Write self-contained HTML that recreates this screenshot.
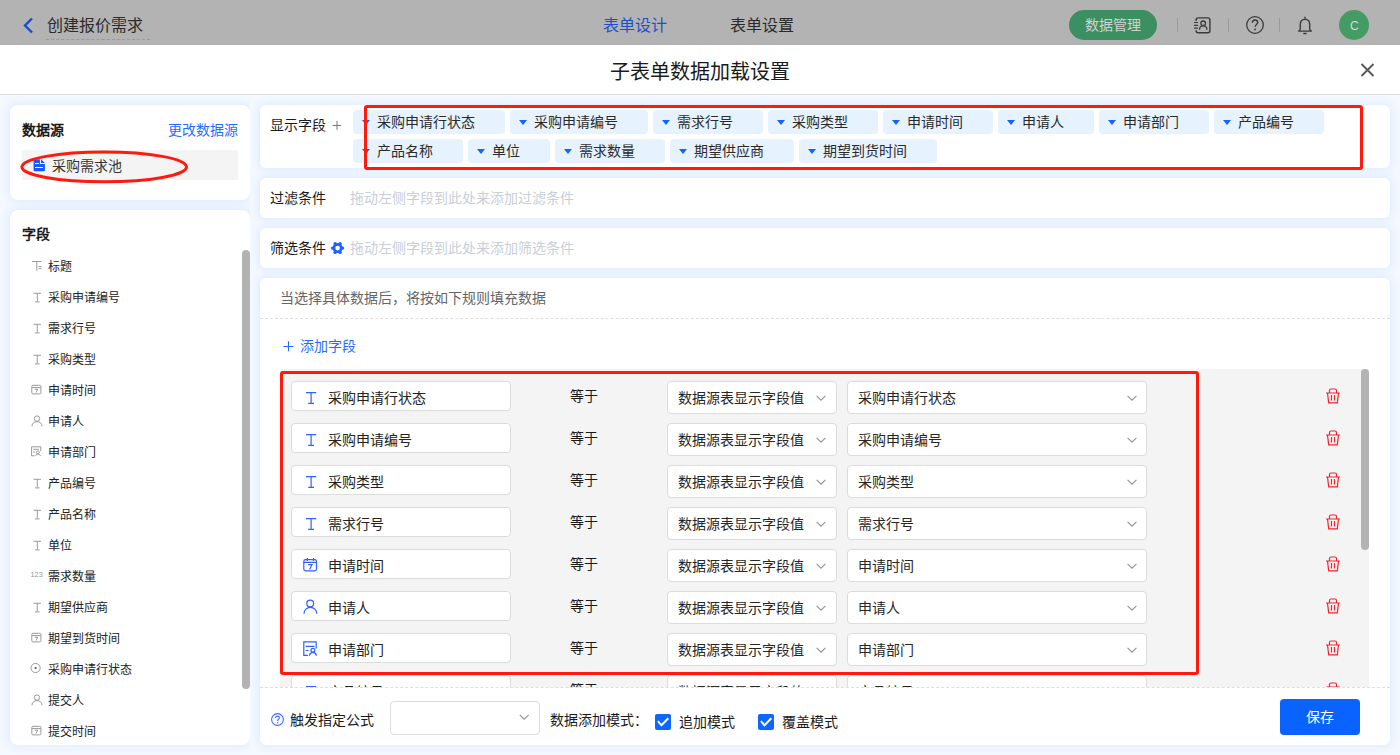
<!DOCTYPE html>
<html lang="zh-CN">
<head>
<meta charset="utf-8">
<style>
*{box-sizing:border-box;margin:0;padding:0}
html,body{width:1400px;height:755px;overflow:hidden}
body{position:relative;background:#f4f8ff;font-family:"Liberation Sans",sans-serif;color:#333;font-size:14px}
.a{position:absolute}
svg{display:block;overflow:visible}
.t{position:absolute;white-space:nowrap;line-height:1}
#top{left:0;top:0;width:1400px;height:45px;background:#b3b3b3;border-bottom:1px solid #b0b0b0}
#mh{left:0;top:45px;width:1400px;height:50px;background:#fff;border-bottom:1px solid #dfdfdf}
.card{position:absolute;background:#fff;border-radius:8px;box-shadow:0 0 9px 1px rgba(80,155,240,0.15)}
.tag{position:absolute;height:24px;background:#e6f2fe;border-radius:4px}
.tag i{position:absolute;left:9px;top:10px;width:0;height:0;border-left:4px solid transparent;border-right:4px solid transparent;border-top:5px solid #1463ff}
.tag span{position:absolute;left:24px;top:5px;font-size:14px;line-height:14px;color:#2a2a2a;white-space:nowrap}
.fi{position:absolute;left:22px;height:20px}
.fi span{position:absolute;left:26px;top:0;font-size:12px;line-height:12px;color:#222;white-space:nowrap}
.row{position:absolute;left:0;width:1089px;height:42px}
.inp{position:absolute;left:11px;top:12px;width:220px;height:30px;background:#fff;border:1px solid #dcdcdc;border-radius:4px}
.inp span{position:absolute;left:36px;top:9px;font-size:14px;line-height:14px;color:#222}
.eq{position:absolute;left:290px;top:20px;font-size:14px;line-height:14px;color:#1a1a1a}
.sel{position:absolute;top:12px;height:33px;background:#fff;border:1px solid #dcdcdc;border-radius:4px}
.sel span{position:absolute;left:10px;top:9px;font-size:14px;line-height:14px;color:#262626;white-space:nowrap}
.trash{position:absolute;left:1045px;top:19px}
</style>
</head>
<body>
<!-- top bar (masked) -->
<div id="top" class="a"></div>
<svg class="a" style="left:22px;top:17px" width="13" height="17" viewBox="0 0 13 17"><path d="M10 1.5 L3 8.5 L10 15.5" fill="none" stroke="#1a4ccc" stroke-width="2.4"/></svg>
<div class="t" style="left:47px;top:18px;font-size:16px;line-height:16px;color:#2b2b2b">创建报价需求</div>
<div class="a" style="left:46px;top:39px;width:104px;border-top:1px dashed #9a9a9a"></div>
<div class="t" style="left:603px;top:18px;font-size:16px;line-height:16px;color:#1d4fcc">表单设计</div>
<div class="t" style="left:730px;top:18px;font-size:16px;line-height:16px;color:#2b2b2b">表单设置</div>
<div class="a" style="left:1069px;top:10px;width:88px;height:30px;border-radius:15px;background:#3b8f61"></div>
<div class="t" style="left:1085px;top:18px;font-size:14px;line-height:14px;color:#d2d2d2">数据管理</div>
<div class="a" style="left:1177px;top:18px;width:1px;height:14px;background:#9a9a9a"></div>
<div class="a" style="left:1228px;top:18px;width:1px;height:14px;background:#9a9a9a"></div>
<div class="a" style="left:1279px;top:18px;width:1px;height:14px;background:#9a9a9a"></div>
<svg class="a" style="left:1192px;top:15px" width="22" height="21" viewBox="0 0 22 21"><path d="M4.1 5.9V4.9Q4.1 2.9 6.1 2.9H15.9Q17.9 2.9 17.9 4.9V15.8Q17.9 17.8 15.9 17.8H6.1Q4.1 17.8 4.1 15.8V15.2" stroke="#3a3a3a" stroke-width="1.4" fill="none"/><path d="M2 7.5H6M2 10.3H6M2 13.2H6" stroke="#3a3a3a" stroke-width="1.2"/><circle cx="11.2" cy="8.3" r="2.3" stroke="#3a3a3a" stroke-width="1.3" fill="none"/><path d="M7.5 14.8C7.5 12.4 9.1 10.9 11.2 10.9S14.9 12.4 14.9 14.8" stroke="#3a3a3a" stroke-width="1.3" fill="none"/></svg>
<svg class="a" style="left:1244px;top:14px" width="22" height="22" viewBox="0 0 22 22"><circle cx="11" cy="11" r="8.3" stroke="#3a3a3a" stroke-width="1.3" fill="none"/><path d="M8.3 8.8C8.3 7.1 9.5 6 11 6S13.7 7 13.7 8.6C13.7 10.4 11.1 10.6 11.1 12.8" stroke="#3a3a3a" stroke-width="1.4" fill="none"/><circle cx="11.1" cy="15.4" r="0.9" fill="#3a3a3a"/></svg>
<svg class="a" style="left:1296px;top:15px" width="18" height="21" viewBox="0 0 18 21"><path d="M9 1.8V3.4" stroke="#3a3a3a" stroke-width="1.5"/><path d="M2.6 16.1Q4.3 15.4 4.3 13.6V9.2C4.3 6.2 6.4 4.2 9 4.2S13.7 6.2 13.7 9.2V13.6Q13.7 15.4 15.4 16.1Z" stroke="#3a3a3a" stroke-width="1.4" fill="none" stroke-linejoin="round"/><path d="M7.3 18.5H10.7" stroke="#3a3a3a" stroke-width="1.4"/></svg>
<div class="a" style="left:1339px;top:10px;width:30px;height:30px;border-radius:15px;background:#459b64"></div>
<div class="t" style="left:1350px;top:20px;font-size:12px;line-height:12px;color:#d8d8d8">C</div>

<!-- modal header -->
<div id="mh" class="a"></div>
<div class="t" style="left:610px;top:62px;font-size:20px;line-height:20px;color:#1a1a1a">子表单数据加载设置</div>
<svg class="a" style="left:1360px;top:63px" width="15" height="14" viewBox="0 0 15 14"><path d="M1.5 1 L13.5 13 M13.5 1 L1.5 13" stroke="#555" stroke-width="1.8" fill="none"/></svg>

<!-- left cards -->
<div class="card" style="left:10px;top:105px;width:240px;height:95px"></div>
<div class="t" style="left:22px;top:123px;font-size:14px;line-height:14px;font-weight:bold;color:#1a1a1a">数据源</div>
<div class="t" style="left:168px;top:123px;font-size:14px;line-height:14px;color:#1f6fff">更改数据源</div>
<div class="a" style="left:22px;top:150px;width:216px;height:30px;background:#f4f4f4;border-radius:2px"></div>
<svg class="a" style="left:33px;top:159px" width="13" height="13" viewBox="0 0 13 13"><path d="M1.4 0.3H6.9V5H11.9V11.2Q11.9 12.2 10.9 12.2H1.6Q0.6 12.2 0.6 11.2V1.1Q0.6 0.3 1.4 0.3Z" fill="#1259ff"/><path d="M8 0.2L11.9 4H8Z" fill="#1259ff"/><path d="M2 4.5H5.8M2 8.5H10" stroke="#fff" stroke-width="1.1"/></svg>
<div class="t" style="left:52px;top:159px;font-size:14px;line-height:14px;color:#333">采购需求池</div>

<div class="card" style="left:10px;top:210px;width:240px;height:535px"></div>
<div class="t" style="left:22px;top:227px;font-size:14px;line-height:14px;font-weight:bold;color:#1a1a1a">字段</div>
<div class="fi" style="top:261px"><svg class="fis" style="position:absolute;left:9px;top:-1px" width="14" height="12"><path d="M1 1.5H10.5M5.8 1.5V10.8M7.6 6.5H10.5M7.6 8.5H10.5" stroke="#9a9a9a" stroke-width="1" fill="none"/></svg><span>标题</span></div>
<div class="fi" style="top:292px"><svg class="fis" style="position:absolute;left:9px;top:-1px" width="14" height="12"><path d="M2.5 2.3H10M6.3 2.3V10.3M4 10.9H8.6" stroke="#9a9a9a" stroke-width="1" fill="none"/></svg><span>采购申请编号</span></div>
<div class="fi" style="top:323px"><svg class="fis" style="position:absolute;left:9px;top:-1px" width="14" height="12"><path d="M2.5 2.3H10M6.3 2.3V10.3M4 10.9H8.6" stroke="#9a9a9a" stroke-width="1" fill="none"/></svg><span>需求行号</span></div>
<div class="fi" style="top:354px"><svg class="fis" style="position:absolute;left:9px;top:-1px" width="14" height="12"><path d="M2.5 2.3H10M6.3 2.3V10.3M4 10.9H8.6" stroke="#9a9a9a" stroke-width="1" fill="none"/></svg><span>采购类型</span></div>
<div class="fi" style="top:385px"><svg class="fis" style="position:absolute;left:9px;top:-1px" width="14" height="12"><rect x="0.8" y="1.3" width="9.1" height="8.6" rx="1.2" stroke="#9a9a9a" stroke-width="1" fill="none"/><path d="M0.8 3.6H9.9M3.9 5.2H6.7L5.1 8.4" stroke="#9a9a9a" stroke-width="1" fill="none"/></svg><span>申请时间</span></div>
<div class="fi" style="top:416px"><svg class="fis" style="position:absolute;left:9px;top:-1px" width="14" height="12"><circle cx="6" cy="3.6" r="2.7" stroke="#9a9a9a" stroke-width="1" fill="none"/><path d="M1 11.3C1 8.2 3.2 6.6 6 6.6S11 8.2 11 11.3" stroke="#9a9a9a" stroke-width="1" fill="none"/></svg><span>申请人</span></div>
<div class="fi" style="top:447px"><svg class="fis" style="position:absolute;left:9px;top:-1px" width="14" height="12"><path d="M9.8 5.2V0.8H0.6V9.8H3.6M2.2 3.3H7.8M2.2 6H4.2" stroke="#9a9a9a" stroke-width="1" fill="none"/><circle cx="6.9" cy="6.4" r="1.5" stroke="#9a9a9a" stroke-width="1" fill="none"/><path d="M4.4 10.1C4.8 8.8 5.7 8.1 6.9 8.1S9.1 8.8 9.6 10.1" stroke="#9a9a9a" stroke-width="1" fill="none"/></svg><span>申请部门</span></div>
<div class="fi" style="top:478px"><svg class="fis" style="position:absolute;left:9px;top:-1px" width="14" height="12"><path d="M2.5 2.3H10M6.3 2.3V10.3M4 10.9H8.6" stroke="#9a9a9a" stroke-width="1" fill="none"/></svg><span>产品编号</span></div>
<div class="fi" style="top:509px"><svg class="fis" style="position:absolute;left:9px;top:-1px" width="14" height="12"><path d="M2.5 2.3H10M6.3 2.3V10.3M4 10.9H8.6" stroke="#9a9a9a" stroke-width="1" fill="none"/></svg><span>产品名称</span></div>
<div class="fi" style="top:540px"><svg class="fis" style="position:absolute;left:9px;top:-1px" width="14" height="12"><path d="M2.5 2.3H10M6.3 2.3V10.3M4 10.9H8.6" stroke="#9a9a9a" stroke-width="1" fill="none"/></svg><span>单位</span></div>
<div class="fi" style="top:571px"><svg class="fis" style="position:absolute;left:9px;top:-1px" width="14" height="12"><text x="-0.6" y="7.2" font-size="7.4" font-family="Liberation Sans" fill="#9a9a9a">123</text></svg><span>需求数量</span></div>
<div class="fi" style="top:602px"><svg class="fis" style="position:absolute;left:9px;top:-1px" width="14" height="12"><path d="M2.5 2.3H10M6.3 2.3V10.3M4 10.9H8.6" stroke="#9a9a9a" stroke-width="1" fill="none"/></svg><span>期望供应商</span></div>
<div class="fi" style="top:633px"><svg class="fis" style="position:absolute;left:9px;top:-1px" width="14" height="12"><rect x="0.8" y="1.3" width="9.1" height="8.6" rx="1.2" stroke="#9a9a9a" stroke-width="1" fill="none"/><path d="M0.8 3.6H9.9M3.9 5.2H6.7L5.1 8.4" stroke="#9a9a9a" stroke-width="1" fill="none"/></svg><span>期望到货时间</span></div>
<div class="fi" style="top:664px"><svg class="fis" style="position:absolute;left:9px;top:-1px" width="14" height="12"><circle cx="4.6" cy="5" r="4.6" stroke="#9a9a9a" stroke-width="1" fill="none"/><circle cx="4.6" cy="5" r="1.1" fill="#555"/></svg><span>采购申请行状态</span></div>
<div class="fi" style="top:695px"><svg class="fis" style="position:absolute;left:9px;top:-1px" width="14" height="12"><circle cx="6" cy="3.6" r="2.7" stroke="#9a9a9a" stroke-width="1" fill="none"/><path d="M1 11.3C1 8.2 3.2 6.6 6 6.6S11 8.2 11 11.3" stroke="#9a9a9a" stroke-width="1" fill="none"/></svg><span>提交人</span></div>
<div class="fi" style="top:726px"><svg class="fis" style="position:absolute;left:9px;top:-1px" width="14" height="12"><rect x="0.8" y="1.3" width="9.1" height="8.6" rx="1.2" stroke="#9a9a9a" stroke-width="1" fill="none"/><path d="M0.8 3.6H9.9M3.9 5.2H6.7L5.1 8.4" stroke="#9a9a9a" stroke-width="1" fill="none"/></svg><span>提交时间</span></div>
<div class="a" style="left:242px;top:250px;width:8px;height:439px;border-radius:4px;background:#b3b3b3"></div>

<div class="a" style="left:250px;top:95px;width:10px;height:660px;background:#f4f8ff"></div>
<!-- right cards -->
<div class="card" style="left:260px;top:105px;width:1130px;height:63px;border-radius:6px"></div>
<div class="t" style="left:270px;top:118px;font-size:14px;line-height:14px;color:#1a1a1a">显示字段</div>
<svg class="a" style="left:332px;top:120px" width="10" height="10" viewBox="0 0 10 10"><path d="M0.6 5.5H9.2M5 1V9.8" stroke="#777" stroke-width="1" fill="none"/></svg>
<div class="tag" style="left:353px;top:110px;width:152px"><i></i><span>采购申请行状态</span></div>
<div class="tag" style="left:510px;top:110px;width:138px"><i></i><span>采购申请编号</span></div>
<div class="tag" style="left:653px;top:110px;width:110px"><i></i><span>需求行号</span></div>
<div class="tag" style="left:768px;top:110px;width:110px"><i></i><span>采购类型</span></div>
<div class="tag" style="left:883px;top:110px;width:110px"><i></i><span>申请时间</span></div>
<div class="tag" style="left:998px;top:110px;width:96px"><i></i><span>申请人</span></div>
<div class="tag" style="left:1099px;top:110px;width:110px"><i></i><span>申请部门</span></div>
<div class="tag" style="left:1214px;top:110px;width:110px"><i></i><span>产品编号</span></div>
<div class="tag" style="left:353px;top:139px;width:110px"><i></i><span>产品名称</span></div>
<div class="tag" style="left:468px;top:139px;width:82px"><i></i><span>单位</span></div>
<div class="tag" style="left:555px;top:139px;width:110px"><i></i><span>需求数量</span></div>
<div class="tag" style="left:670px;top:139px;width:124px"><i></i><span>期望供应商</span></div>
<div class="tag" style="left:799px;top:139px;width:138px"><i></i><span>期望到货时间</span></div>

<div class="card" style="left:260px;top:178px;width:1130px;height:40px;border-radius:6px"></div>
<div class="t" style="left:270px;top:191px;font-size:14px;line-height:14px;color:#1a1a1a">过滤条件</div>
<div class="t" style="left:350px;top:191px;font-size:14px;line-height:14px;color:#c8cfd9">拖动左侧字段到此处来添加过滤条件</div>

<div class="card" style="left:260px;top:228px;width:1130px;height:40px;border-radius:6px"></div>
<div class="t" style="left:270px;top:241px;font-size:14px;line-height:14px;color:#1a1a1a">筛选条件</div>
<svg class="a" style="left:330px;top:241px" width="16" height="15" viewBox="0 0 16 15"><g fill="#1f62ff"><circle cx="7.6" cy="7.1" r="5"/><circle cx="2.6" cy="7.1" r="1.7"/><circle cx="12.6" cy="7.1" r="1.7"/><circle cx="5.1" cy="2.8" r="1.7"/><circle cx="10.1" cy="2.8" r="1.7"/><circle cx="5.1" cy="11.4" r="1.7"/><circle cx="10.1" cy="11.4" r="1.7"/></g><circle cx="7.6" cy="7.1" r="2.3" fill="#fff"/></svg>
<div class="t" style="left:350px;top:241px;font-size:14px;line-height:14px;color:#c8cfd9">拖动左侧字段到此处来添加筛选条件</div>

<div class="card" style="left:260px;top:278px;width:1130px;height:467px;border-radius:6px"></div>
<div class="t" style="left:280px;top:291px;font-size:14px;line-height:14px;color:#666">当选择具体数据后，将按如下规则填充数据</div>
<div class="a" style="left:260px;top:318px;width:1130px;border-top:1px dashed #dedede"></div>
<svg class="a" style="left:283px;top:341px" width="11" height="11" viewBox="0 0 11 11"><path d="M0.4 5.5H10.4M5.5 0.3V10.2" stroke="#1f6fff" stroke-width="1.1" fill="none"/></svg>
<div class="t" style="left:300px;top:339px;font-size:14px;line-height:14px;color:#1f6fff">添加字段</div>

<div class="a" id="rows" style="left:280px;top:369px;width:1089px;height:318px;background:#f4f4f4;overflow:hidden"><div class="row" style="top:0px"><div class="inp"><div style="position:absolute;left:14px;top:8px"><svg width="12" height="15" viewBox="0 0 12 15"><path d="M0 2.6H10.2M5.1 2.6V13.4M2.2 13.4H8" stroke="#2e62ff" stroke-width="1.2" fill="none"/></svg></div><span>采购申请行状态</span></div><div class="eq">等于</div><div class="sel" style="left:387px;width:170px"><span>数据源表显示字段值</span><div style="position:absolute;left:148px;top:13px"><svg width="11" height="7" viewBox="0 0 11 7"><path d="M0.6 0.8L5 5.2L9.4 0.8" stroke="#909399" stroke-width="1.1" fill="none"/></svg></div></div><div class="sel" style="left:567px;width:300px"><span>采购申请行状态</span><div style="position:absolute;left:279px;top:13px"><svg width="11" height="7" viewBox="0 0 11 7"><path d="M0.6 0.8L5 5.2L9.4 0.8" stroke="#909399" stroke-width="1.1" fill="none"/></svg></div></div><div class="trash"><svg width="16" height="17" viewBox="0 0 16 17"><path d="M1 5H15M4.5 5V2.5Q4.5 1 6 1H10Q11.5 1 11.5 2.5V5M2.5 5L3.7 14.9H12.3L13.5 5M6.5 7V12.5M9.5 7V12.5" stroke="#f5222d" stroke-width="1.2" fill="none"/></svg></div></div>
<div class="row" style="top:42px"><div class="inp"><div style="position:absolute;left:14px;top:8px"><svg width="12" height="15" viewBox="0 0 12 15"><path d="M0 2.6H10.2M5.1 2.6V13.4M2.2 13.4H8" stroke="#2e62ff" stroke-width="1.2" fill="none"/></svg></div><span>采购申请编号</span></div><div class="eq">等于</div><div class="sel" style="left:387px;width:170px"><span>数据源表显示字段值</span><div style="position:absolute;left:148px;top:13px"><svg width="11" height="7" viewBox="0 0 11 7"><path d="M0.6 0.8L5 5.2L9.4 0.8" stroke="#909399" stroke-width="1.1" fill="none"/></svg></div></div><div class="sel" style="left:567px;width:300px"><span>采购申请编号</span><div style="position:absolute;left:279px;top:13px"><svg width="11" height="7" viewBox="0 0 11 7"><path d="M0.6 0.8L5 5.2L9.4 0.8" stroke="#909399" stroke-width="1.1" fill="none"/></svg></div></div><div class="trash"><svg width="16" height="17" viewBox="0 0 16 17"><path d="M1 5H15M4.5 5V2.5Q4.5 1 6 1H10Q11.5 1 11.5 2.5V5M2.5 5L3.7 14.9H12.3L13.5 5M6.5 7V12.5M9.5 7V12.5" stroke="#f5222d" stroke-width="1.2" fill="none"/></svg></div></div>
<div class="row" style="top:84px"><div class="inp"><div style="position:absolute;left:14px;top:8px"><svg width="12" height="15" viewBox="0 0 12 15"><path d="M0 2.6H10.2M5.1 2.6V13.4M2.2 13.4H8" stroke="#2e62ff" stroke-width="1.2" fill="none"/></svg></div><span>采购类型</span></div><div class="eq">等于</div><div class="sel" style="left:387px;width:170px"><span>数据源表显示字段值</span><div style="position:absolute;left:148px;top:13px"><svg width="11" height="7" viewBox="0 0 11 7"><path d="M0.6 0.8L5 5.2L9.4 0.8" stroke="#909399" stroke-width="1.1" fill="none"/></svg></div></div><div class="sel" style="left:567px;width:300px"><span>采购类型</span><div style="position:absolute;left:279px;top:13px"><svg width="11" height="7" viewBox="0 0 11 7"><path d="M0.6 0.8L5 5.2L9.4 0.8" stroke="#909399" stroke-width="1.1" fill="none"/></svg></div></div><div class="trash"><svg width="16" height="17" viewBox="0 0 16 17"><path d="M1 5H15M4.5 5V2.5Q4.5 1 6 1H10Q11.5 1 11.5 2.5V5M2.5 5L3.7 14.9H12.3L13.5 5M6.5 7V12.5M9.5 7V12.5" stroke="#f5222d" stroke-width="1.2" fill="none"/></svg></div></div>
<div class="row" style="top:126px"><div class="inp"><div style="position:absolute;left:14px;top:8px"><svg width="12" height="15" viewBox="0 0 12 15"><path d="M0 2.6H10.2M5.1 2.6V13.4M2.2 13.4H8" stroke="#2e62ff" stroke-width="1.2" fill="none"/></svg></div><span>需求行号</span></div><div class="eq">等于</div><div class="sel" style="left:387px;width:170px"><span>数据源表显示字段值</span><div style="position:absolute;left:148px;top:13px"><svg width="11" height="7" viewBox="0 0 11 7"><path d="M0.6 0.8L5 5.2L9.4 0.8" stroke="#909399" stroke-width="1.1" fill="none"/></svg></div></div><div class="sel" style="left:567px;width:300px"><span>需求行号</span><div style="position:absolute;left:279px;top:13px"><svg width="11" height="7" viewBox="0 0 11 7"><path d="M0.6 0.8L5 5.2L9.4 0.8" stroke="#909399" stroke-width="1.1" fill="none"/></svg></div></div><div class="trash"><svg width="16" height="17" viewBox="0 0 16 17"><path d="M1 5H15M4.5 5V2.5Q4.5 1 6 1H10Q11.5 1 11.5 2.5V5M2.5 5L3.7 14.9H12.3L13.5 5M6.5 7V12.5M9.5 7V12.5" stroke="#f5222d" stroke-width="1.2" fill="none"/></svg></div></div>
<div class="row" style="top:168px"><div class="inp"><div style="position:absolute;left:11px;top:7px"><svg width="16" height="16" viewBox="0 0 16 16"><rect x="0.8" y="2.6" width="12.7" height="11.3" rx="1.8" stroke="#2e62ff" stroke-width="1.2" fill="none"/><path d="M0.8 5.4H13.5M4.4 1V4M10.5 1V4M5.2 7.6H9L6.6 12.6" stroke="#2e62ff" stroke-width="1.2" fill="none"/></svg></div><span>申请时间</span></div><div class="eq">等于</div><div class="sel" style="left:387px;width:170px"><span>数据源表显示字段值</span><div style="position:absolute;left:148px;top:13px"><svg width="11" height="7" viewBox="0 0 11 7"><path d="M0.6 0.8L5 5.2L9.4 0.8" stroke="#909399" stroke-width="1.1" fill="none"/></svg></div></div><div class="sel" style="left:567px;width:300px"><span>申请时间</span><div style="position:absolute;left:279px;top:13px"><svg width="11" height="7" viewBox="0 0 11 7"><path d="M0.6 0.8L5 5.2L9.4 0.8" stroke="#909399" stroke-width="1.1" fill="none"/></svg></div></div><div class="trash"><svg width="16" height="17" viewBox="0 0 16 17"><path d="M1 5H15M4.5 5V2.5Q4.5 1 6 1H10Q11.5 1 11.5 2.5V5M2.5 5L3.7 14.9H12.3L13.5 5M6.5 7V12.5M9.5 7V12.5" stroke="#f5222d" stroke-width="1.2" fill="none"/></svg></div></div>
<div class="row" style="top:210px"><div class="inp"><div style="position:absolute;left:11px;top:7px"><svg width="16" height="16" viewBox="0 0 16 16"><circle cx="7.2" cy="4.5" r="3.4" stroke="#2e62ff" stroke-width="1.2" fill="none"/><path d="M1 14.7C1 10.9 3.8 8.3 7.3 8.3S13.8 10.9 13.8 14.7" stroke="#2e62ff" stroke-width="1.2" fill="none"/></svg></div><span>申请人</span></div><div class="eq">等于</div><div class="sel" style="left:387px;width:170px"><span>数据源表显示字段值</span><div style="position:absolute;left:148px;top:13px"><svg width="11" height="7" viewBox="0 0 11 7"><path d="M0.6 0.8L5 5.2L9.4 0.8" stroke="#909399" stroke-width="1.1" fill="none"/></svg></div></div><div class="sel" style="left:567px;width:300px"><span>申请人</span><div style="position:absolute;left:279px;top:13px"><svg width="11" height="7" viewBox="0 0 11 7"><path d="M0.6 0.8L5 5.2L9.4 0.8" stroke="#909399" stroke-width="1.1" fill="none"/></svg></div></div><div class="trash"><svg width="16" height="17" viewBox="0 0 16 17"><path d="M1 5H15M4.5 5V2.5Q4.5 1 6 1H10Q11.5 1 11.5 2.5V5M2.5 5L3.7 14.9H12.3L13.5 5M6.5 7V12.5M9.5 7V12.5" stroke="#f5222d" stroke-width="1.2" fill="none"/></svg></div></div>
<div class="row" style="top:252px"><div class="inp"><div style="position:absolute;left:11px;top:7px"><svg width="16" height="16" viewBox="0 0 16 16"><path d="M13.2 7.5V0.8H0.8V14.3H5M2.6 5.3H11.6M2.6 9.5H5.5" stroke="#2e62ff" stroke-width="1.2" fill="none"/><circle cx="9.9" cy="9.3" r="1.9" stroke="#2e62ff" stroke-width="1.2" fill="none"/><path d="M6.4 14.6C6.8 12.6 8.1 11.4 9.9 11.4S13 12.6 13.5 14.6" stroke="#2e62ff" stroke-width="1.2" fill="none"/></svg></div><span>申请部门</span></div><div class="eq">等于</div><div class="sel" style="left:387px;width:170px"><span>数据源表显示字段值</span><div style="position:absolute;left:148px;top:13px"><svg width="11" height="7" viewBox="0 0 11 7"><path d="M0.6 0.8L5 5.2L9.4 0.8" stroke="#909399" stroke-width="1.1" fill="none"/></svg></div></div><div class="sel" style="left:567px;width:300px"><span>申请部门</span><div style="position:absolute;left:279px;top:13px"><svg width="11" height="7" viewBox="0 0 11 7"><path d="M0.6 0.8L5 5.2L9.4 0.8" stroke="#909399" stroke-width="1.1" fill="none"/></svg></div></div><div class="trash"><svg width="16" height="17" viewBox="0 0 16 17"><path d="M1 5H15M4.5 5V2.5Q4.5 1 6 1H10Q11.5 1 11.5 2.5V5M2.5 5L3.7 14.9H12.3L13.5 5M6.5 7V12.5M9.5 7V12.5" stroke="#f5222d" stroke-width="1.2" fill="none"/></svg></div></div>
<div class="row" style="top:294px"><div class="inp"><div style="position:absolute;left:14px;top:8px"><svg width="12" height="15" viewBox="0 0 12 15"><path d="M0 2.6H10.2M5.1 2.6V13.4M2.2 13.4H8" stroke="#2e62ff" stroke-width="1.2" fill="none"/></svg></div><span>产品编号</span></div><div class="eq">等于</div><div class="sel" style="left:387px;width:170px"><span>数据源表显示字段值</span><div style="position:absolute;left:148px;top:13px"><svg width="11" height="7" viewBox="0 0 11 7"><path d="M0.6 0.8L5 5.2L9.4 0.8" stroke="#909399" stroke-width="1.1" fill="none"/></svg></div></div><div class="sel" style="left:567px;width:300px"><span>产品编号</span><div style="position:absolute;left:279px;top:13px"><svg width="11" height="7" viewBox="0 0 11 7"><path d="M0.6 0.8L5 5.2L9.4 0.8" stroke="#909399" stroke-width="1.1" fill="none"/></svg></div></div><div class="trash"><svg width="16" height="17" viewBox="0 0 16 17"><path d="M1 5H15M4.5 5V2.5Q4.5 1 6 1H10Q11.5 1 11.5 2.5V5M2.5 5L3.7 14.9H12.3L13.5 5M6.5 7V12.5M9.5 7V12.5" stroke="#f5222d" stroke-width="1.2" fill="none"/></svg></div></div></div>
<div class="a" style="left:1361px;top:369px;width:8px;height:181px;border-radius:4px;background:#b3b3b3"></div>
<div class="a" style="left:260px;top:687px;width:1130px;border-top:1px dashed #dedede"></div>

<!-- footer -->
<div class="t" style="left:290px;top:713px;font-size:14px;line-height:14px;color:#1a1a1a">触发指定公式</div>
<div class="a" style="left:390px;top:701px;width:150px;height:34px;border:1px solid #dcdcdc;border-radius:4px;background:#fff"></div>
<div class="t" style="left:550px;top:713px;font-size:14px;line-height:14px;color:#1a1a1a">数据添加模式：</div>
<div class="a" style="left:655px;top:714px;width:16px;height:16px;border-radius:2px;background:#0d66ff"></div>
<div class="t" style="left:679px;top:715px;font-size:14px;line-height:14px;color:#1a1a1a">追加模式</div>
<div class="a" style="left:758px;top:714px;width:16px;height:16px;border-radius:2px;background:#0d66ff"></div>
<div class="t" style="left:782px;top:715px;font-size:14px;line-height:14px;color:#1a1a1a">覆盖模式</div>
<div class="a" style="left:1280px;top:699px;width:80px;height:36px;border-radius:4px;background:#0a62ff"></div>
<div class="t" style="left:1306px;top:710px;font-size:14px;line-height:14px;color:#fff">保存</div>

<svg class="a" style="left:270px;top:712px" width="15" height="15" viewBox="0 0 15 15"><circle cx="7.5" cy="7.5" r="5.9" stroke="#3a6cff" stroke-width="1.1" fill="none"/><path d="M5.6 6C5.6 4.9 6.4 4.1 7.5 4.1S9.4 4.8 9.4 5.9C9.4 7.2 7.6 7.3 7.6 8.9" stroke="#3a6cff" stroke-width="1.1" fill="none"/><circle cx="7.6" cy="10.7" r="0.7" fill="#3a6cff"/></svg>
<svg class="a" style="left:519px;top:714px" width="11" height="7" viewBox="0 0 11 7"><path d="M0.8 0.8L5.2 5.2L9.6 0.8" stroke="#909399" stroke-width="1.1" fill="none"/></svg>
<svg class="a" style="left:655px;top:714px" width="16" height="16" viewBox="0 0 16 16"><path d="M2.9 7.1L6.5 11.3L13.3 4.3" stroke="#fff" stroke-width="2" fill="none"/></svg>
<svg class="a" style="left:758px;top:714px" width="16" height="16" viewBox="0 0 16 16"><path d="M2.9 7.1L6.5 11.3L13.3 4.3" stroke="#fff" stroke-width="2" fill="none"/></svg>
<!-- red annotations -->
<div class="a" style="left:364px;top:105px;width:999px;height:65px;border:3px solid #ff1a0d;border-radius:3px"></div>
<div class="a" style="left:280px;top:371px;width:919px;height:304px;border:3px solid #ff1a0d;border-radius:3px"></div>
<svg class="a" style="left:18px;top:148px" width="174" height="37" viewBox="0 0 174 37"><ellipse cx="86.2" cy="18.9" rx="82.3" ry="14.9" fill="none" stroke="#ff1a0d" stroke-width="3"/></svg>
</body>
</html>
